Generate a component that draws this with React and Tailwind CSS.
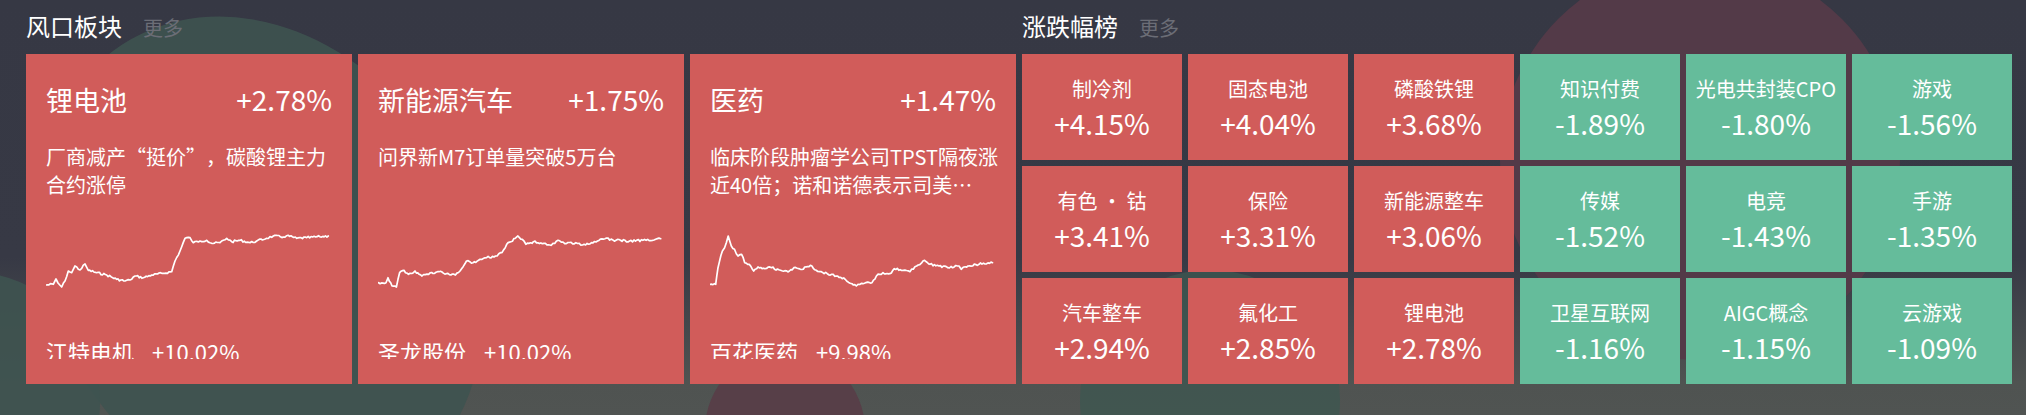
import React from "react";

// key points of each sparkline, relative to a 286x60 box
const lineA = [
  [0, 54], [7.3, 53.3], [10, 48], [12, 52], [15.7, 56], [19, 50], [22.3, 40], [25.7, 41.7],
  [29, 35], [34, 39], [39, 33], [42.3, 39.3], [50.7, 41.7], [60.7, 44], [70.7, 48.3], [79, 50],
  [84, 49], [89, 45], [97.3, 46.7], [105.7, 44], [117.3, 42.3], [125.7, 40.7], [129, 30],
  [134, 20], [139, 7.3], [144, 6.7], [147.3, 11.7], [154, 10], [160.7, 9.3], [165.7, 12.3],
  [174, 11.7], [180.7, 7.3], [185.7, 10.7], [194, 9.3], [204, 11.7], [210.7, 10], [220.7, 7.3],
  [227.3, 5], [237.3, 6], [240.7, 4.7], [250.7, 7.3], [260.7, 6.7], [274, 5.7], [282.3, 5],
];

const lineB = [
  [0.6, 51.7], [8, 51.7], [10, 46.7], [14, 55], [18.4, 56], [21.6, 41.7], [26, 39.3], [30.5, 43.3],
  [37, 40], [44, 45], [50.6, 43.3], [59.5, 40.7], [68.4, 42.7], [77.4, 44], [82, 40], [88.5, 30],
  [95, 31.7], [102, 28.3], [108.6, 26.7], [117.5, 25], [124, 21.7], [128.7, 13.3], [133, 10.7],
  [139.9, 5], [144.3, 8.3], [147.9, 13.3], [155.5, 10.7], [164.4, 12.7], [173.3, 14.3], [180, 9.3],
  [186.7, 12.7], [197.9, 11.7], [204.6, 14], [213.5, 11.7], [226.9, 7.7], [238, 9.3], [251.5, 10],
  [264.9, 9.3], [276, 9], [282.7, 7.7],
];

const lineC = [
  [0.4, 53.3], [5.7, 53.3], [8, 36.7], [12.4, 20], [14.6, 16.7], [18.2, 5], [21.3, 15], [24.5, 18.3],
  [28, 25], [31.6, 23.3], [34.7, 31.7], [39.2, 33.3], [43.7, 40], [48, 36], [54.8, 37.7], [61.5, 36.7],
  [70.4, 39.3], [79.4, 40], [83.8, 36.7], [90.5, 38.3], [100.4, 34.3], [106.2, 39.3], [117.3, 42.7],
  [126.2, 45], [135.2, 48.3], [141.9, 52.7], [146.3, 55], [153, 52.7], [162, 51.7], [166.4, 45],
  [173, 41.7], [179.8, 42.7], [184.3, 37.7], [193.2, 39.3], [199.9, 40.7], [206.6, 35], [214.6, 29.3],
  [220, 33.3], [228.9, 35], [237.8, 36.7], [249, 35], [251.2, 38.3], [258, 35], [269, 33.3], [282.5, 31.7],
];

const hotCards = [
  {
    name: "锂电池",
    pct: "+2.78%",
    desc: (
      <>
        厂商减产
        <span className="inline-block w-[20px] text-right">“</span>
        挺价
        <span className="inline-block w-[20px] text-left">”</span>
        ，碳酸锂主力合约涨停
      </>
    ),
    stock: "江特电机",
    stockPct: "+10.02%",
    line: lineA,
    seed: 7,
  },
  {
    name: "新能源汽车",
    pct: "+1.75%",
    desc: "问界新M7订单量突破5万台",
    stock: "圣龙股份",
    stockPct: "+10.02%",
    line: lineB,
    seed: 19,
  },
  {
    name: "医药",
    pct: "+1.47%",
    desc: "临床阶段肿瘤学公司TPST隔夜涨近40倍；诺和诺德表示司美…",
    stock: "百花医药",
    stockPct: "+9.98%",
    line: lineC,
    seed: 31,
  },
];

const ranks = [
  { name: "制冷剂", pct: "+4.15%", up: true },
  { name: "固态电池", pct: "+4.04%", up: true },
  { name: "磷酸铁锂", pct: "+3.68%", up: true },
  { name: "知识付费", pct: "-1.89%", up: false },
  { name: "光电共封装CPO", pct: "-1.80%", up: false },
  { name: "游戏", pct: "-1.56%", up: false },
  { name: "有色 · 钴", pct: "+3.41%", up: true },
  { name: "保险", pct: "+3.31%", up: true },
  { name: "新能源整车", pct: "+3.06%", up: true },
  { name: "传媒", pct: "-1.52%", up: false },
  { name: "电竞", pct: "-1.43%", up: false },
  { name: "手游", pct: "-1.35%", up: false },
  { name: "汽车整车", pct: "+2.94%", up: true },
  { name: "氟化工", pct: "+2.85%", up: true },
  { name: "锂电池", pct: "+2.78%", up: true },
  { name: "卫星互联网", pct: "-1.16%", up: false },
  { name: "AIGC概念", pct: "-1.15%", up: false },
  { name: "云游戏", pct: "-1.09%", up: false },
];

// turn key points into a jagged intraday-looking path
const buildPath = (pts, seed) => {
  let s = seed;
  const rnd = () => {
    s = (s * 9301 + 49297) % 233280;
    return s / 233280;
  };
  const out = [];
  for (let i = 0; i < pts.length - 1; i++) {
    const [x0, y0] = pts[i];
    const [x1, y1] = pts[i + 1];
    const steps = Math.max(1, Math.round((x1 - x0) / 1.5));
    for (let k = 0; k < steps; k++) {
      const t = k / steps;
      const jitter = k === 0 ? 0 : (rnd() - 0.5) * 2.2;
      out.push([x0 + (x1 - x0) * t, y0 + (y1 - y0) * t + jitter]);
    }
  }
  out.push(pts[pts.length - 1]);
  return "M" + out.map(([x, y]) => `${x.toFixed(1)} ${y.toFixed(1)}`).join(" L");
};

const SectionHeader = ({ title }) => (
  <div className="flex items-baseline h-[32px] mb-[12px]">
    <span className="text-[24px] leading-[32px] text-white">{title}</span>
    <span className="ml-[21px] text-[20px] leading-[32px] text-[#6b6d76]">更多</span>
  </div>
);

const HotCard = ({ card }) => (
  <div className="h-[330px] bg-[#d15c5a] px-5 pt-[27px] text-white flex flex-col">
    <div className="flex justify-between items-baseline">
      <span className="text-[27px] leading-[36px]">{card.name}</span>
      <span className="text-[28px] leading-[36px]">{card.pct}</span>
    </div>
    <div className="mt-[25px] mr-[-6px] h-[56px] text-[20px] leading-[28px] line-clamp-2 overflow-hidden">
      {card.desc}
    </div>
    <svg
      className="mt-[32px] block"
      width="286"
      height="60"
      viewBox="0 0 286 60"
      fill="none"
    >
      <path
        d={buildPath(card.line, card.seed)}
        stroke="#ffffff"
        strokeWidth="1.7"
        strokeLinejoin="round"
        strokeLinecap="round"
      />
    </svg>
    <div className="mt-[45px] h-[23px] overflow-hidden">
      <div className="text-[22px] leading-[30px] whitespace-nowrap">
        {card.stock}
        <span className="ml-[18px]">{card.stockPct}</span>
      </div>
    </div>
  </div>
);

const RankTile = ({ item }) => (
  <div
    className={
      "h-[106px] flex flex-col items-center justify-center pt-[2px] text-white " +
      (item.up ? "bg-[#d15c5a]" : "bg-[#65bc9b]")
    }
  >
    <div className="text-[20px] leading-[28px] whitespace-nowrap">{item.name}</div>
    <div className="mt-[2px] text-[28px] leading-[36px]">{item.pct}</div>
  </div>
);

export default function App() {
  return (
    <div className="relative h-[415px] w-full overflow-hidden bg-[linear-gradient(180deg,#363844_0%,#373945_62%,#4f5351_92%,#505452_100%)] font-['Noto_Sans_CJK_SC','Noto_Sans',sans-serif]">
      {/* background blobs */}
      <div className="absolute left-[50px] top-[5px] h-[520px] w-[420px] -rotate-30 rounded-[50%] bg-[#3e5350] opacity-90" />
      <div className="absolute left-[-160px] top-[272px] h-[260px] w-[260px] rounded-full bg-[#3e5350] opacity-90" />
      <div className="absolute left-[1500px] top-[-40px] h-[400px] w-[400px] rounded-full bg-[#533a48]" />
      <div className="absolute left-[705px] top-[350px] h-[160px] w-[160px] rounded-full bg-[#573f48]" />
      <div className="absolute left-[1080px] top-[270px] h-[260px] w-[260px] rounded-full bg-[#3d5650] opacity-80" />

      <div className="relative flex gap-[6px] pl-[26px] pt-[10px]">
        <section className="w-[990px]">
          <SectionHeader title="风口板块" />
          <div className="grid grid-cols-3 gap-[6px]">
            {hotCards.map((card) => (
              <HotCard key={card.name} card={card} />
            ))}
          </div>
        </section>
        <section className="w-[990px]">
          <SectionHeader title="涨跌幅榜" />
          <div className="grid grid-cols-6 gap-[6px]">
            {ranks.map((item, i) => (
              <RankTile key={i} item={item} />
            ))}
          </div>
        </section>
      </div>
    </div>
  );
}
